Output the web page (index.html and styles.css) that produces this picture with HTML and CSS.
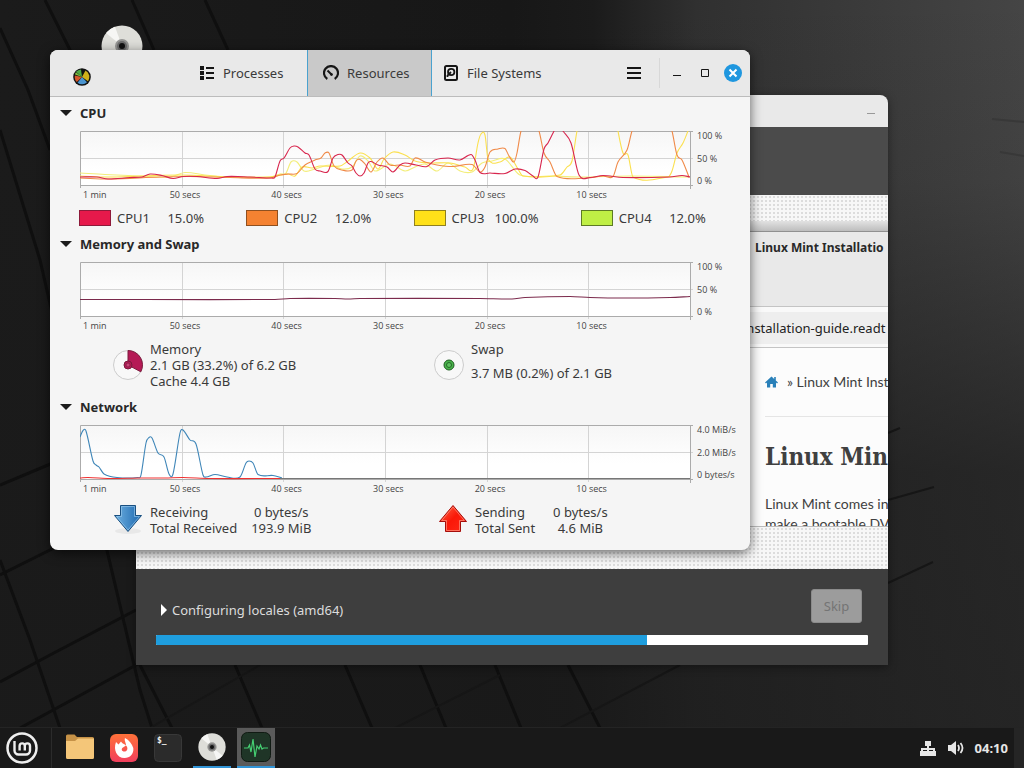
FILE: index.html
```html
<!DOCTYPE html>
<html lang="en">
<head>
    <meta charset="UTF-8">
    <meta name="viewport" content="width=device-width, initial-scale=1.0">
    <title>System Monitor</title>
    <link rel="stylesheet" href="styles.css">
</head>
<body>
    <main class="desktop">
        <svg class="wallpaper" viewBox="0 0 1024 727" preserveAspectRatio="none" aria-hidden="true">
            <defs>
                <linearGradient id="base" x1="0" y1="0" x2="1" y2="0">
                    <stop offset="0" stop-color="#1b1b1b"/>
                    <stop offset="0.5" stop-color="#171717"/>
                    <stop offset="0.58" stop-color="#1b1b1b"/>
                    <stop offset="0.68" stop-color="#303030"/>
                    <stop offset="1" stop-color="#454545"/>
                </linearGradient>
                <linearGradient id="shade" x1="0" y1="0" x2="0" y2="1">
                    <stop offset="0" stop-color="#1a1a1a" stop-opacity="0"/>
                    <stop offset="0.25" stop-color="#1a1a1a" stop-opacity="0.1"/>
                    <stop offset="0.65" stop-color="#1a1a1a" stop-opacity="0.7"/>
                    <stop offset="1" stop-color="#1a1a1a" stop-opacity="0.75"/>
                </linearGradient>
            </defs>
            <rect width="1024" height="727" fill="url(#base)"/>
            <rect width="1024" height="727" fill="url(#shade)"/>
            <g fill="none" stroke="#0f0f0f" stroke-width="3">
                <path d="M0 130 40 260 88 470 140 690 152 728"/>
                <path d="M45 0 75 60M132 0 154 50M205 0 228 50"/>
                <path d="M0 28 28 90 50 150"/>
                <path d="M0 485 60 460 136 430M0 575 60 545 136 510M0 682 50 655 136 610M20 728 136 665 180 645"/>
                <path d="M0 560 30 640 60 728M140 665 172 728M235 665 262 728M345 665 372 728M420 665 446 728M495 665 521 728M568 665 600 728"/>
            </g>
            <g fill="none" stroke="#161616" stroke-width="2">
                <path d="M150 728 260 665M395 728 500 675M560 728 680 665"/>
                <path d="M888 500 934 487M888 583 933 562M888 433 900 428"/>
                <path d="M992 119 1024 122M1000 152 1024 156" stroke="#383838"/>
            </g>
        </svg>

        <svg class="desktop-icon" viewBox="0 0 42 42" aria-hidden="true">
            <use href="#disc"/>
        </svg>

        <section class="window installer" aria-label="Install">
            <header class="installer-bar">
                <button class="installer-min" type="button" aria-label="Minimize window"></button>
            </header>
            <div class="installer-head"></div>
            <div class="slide">
                <div class="browser">
                    <div class="browser-tab">Linux Mint Installatio</div>
                    <div class="browser-url"><span>installation-guide.readt</span></div>
                    <div class="browser-page">
                        <nav class="crumbs">
                            <svg width="13" height="12" viewBox="0 0 13 12" aria-hidden="true">
                                <path d="M6.500.600 0 6.400 1 7.400 2 6.500V11.500H5.200V8H7.800V11.500H11V6.500L12 7.400 13 6.400 10.800 4.400V1H9.200V3Z" fill="#2980b9"/>
                            </svg>
                            <span>» Linux Mint Inst</span>
                        </nav>
                        <h1>Linux Min</h1>
                        <p>Linux Mint comes in<br>make a bootable DV</p>
                    </div>
                </div>
            </div>
            <footer class="installer-foot">
                <div class="progress-row">
                    <button class="expander" type="button">
                        <svg width="8" height="12" viewBox="0 0 8 12" aria-hidden="true"><path d="M1 0 7 6 1 12Z" fill="#fff"/></svg>
                        Configuring locales (amd64)
                    </button>
                    <button class="skip" type="button" disabled>Skip</button>
                </div>
                <progress class="bar" value="69" max="100" aria-label="Installation progress"></progress>
            </footer>
        </section>

        <section class="window monitor" aria-label="System Monitor">
            <header class="titlebar">
                <svg class="app-icon" viewBox="0 0 18 18" aria-hidden="true">
                    <circle cx="9" cy="9" r="8.800" fill="#111"/>
                    <path d="M9 9 3 3.800A8 8 0 0 1 8 1.500Z" fill="#4fa944"/>
                    <path d="M9 9 12.500 2.500A7.400 7.400 0 0 1 15 13.200Z" fill="#cfb01a"/>
                    <path d="M9 9 14 14.300A7.200 7.200 0 0 1 4.500 14.800Z" fill="#4a94cf"/>
                    <path d="M9 9 3.800 14A7.200 7.200 0 0 1 1.900 7.400Z" fill="#d4572b"/>
                    <path d="M9 9 2 6.500A7.200 7.200 0 0 1 3 4.300Z" fill="#7fbb3f"/>
                </svg>
                <nav class="tabs">
                    <button class="tab" type="button">
                        <svg width="16" height="16" viewBox="0 0 16 16" fill="#161616" aria-hidden="true">
                            <path d="M1 1h4v4H1zM1 6h4v4H1zM1 11h4v4H1zM7 2h8v2H7zM7 7h8v2H7zM7 12h8v2H7z"/>
                        </svg>
                        Processes
                    </button>
                    <button class="tab active" type="button">
                        <svg width="16" height="16" viewBox="0 0 16 16" fill="none" stroke="#161616" aria-hidden="true">
                            <path d="M4.300 14A7 7 0 1 1 11.700 14" stroke-width="2.200"/>
                            <path d="M4.500 5.500 8.500 9.500" stroke-width="2"/>
                            <circle cx="8.500" cy="9.500" r="1" fill="#161616"/>
                        </svg>
                        Resources
                    </button>
                    <button class="tab" type="button">
                        <svg width="16" height="16" viewBox="0 0 16 16" fill="none" stroke="#161616" aria-hidden="true">
                            <rect x="2" y="1" width="12" height="14" rx="1.500" stroke-width="2"/>
                            <circle cx="8.200" cy="7" r="3.200" stroke-width="1.800"/>
                            <path d="M8 7 4.500 10.500V12" stroke-width="1.800"/>
                        </svg>
                        File Systems
                    </button>
                </nav>
                <button class="menu-button" type="button" aria-label="Menu">
                    <svg width="16" height="14" viewBox="0 0 16 14" fill="#161616" aria-hidden="true"><path d="M1 1h14v2H1zM1 6h14v2H1zM1 11h14v2H1z"/></svg>
                </button>
                <div class="controls">
                    <button type="button" aria-label="Minimize">
                        <svg width="10" height="10" viewBox="0 0 10 10" aria-hidden="true"><path d="M1 7.500h8" stroke="#161616"/></svg>
                    </button>
                    <button type="button" aria-label="Maximize">
                        <svg width="10" height="10" viewBox="0 0 10 10" aria-hidden="true"><path d="M1.500 1.500h7v7h-7z" fill="none" stroke="#161616"/></svg>
                    </button>
                    <button type="button" aria-label="Close">
                        <svg width="18" height="18" viewBox="0 0 18 18" aria-hidden="true">
                            <circle cx="9" cy="9" r="9" fill="#1f97df"/>
                            <path d="M5.500 5.500 12.500 12.500M12.500 5.500 5.500 12.500" stroke="#fff" stroke-width="2"/>
                        </svg>
                    </button>
                </div>
            </header>

            <div class="resources">
                <details open>
                    <summary>CPU</summary>
                    <div class="chart">
                        <svg class="plot" id="cpu-plot" viewBox="0 0 610 55" preserveAspectRatio="none"></svg>
                        <div class="scale"><span>100 %</span><span>50 %</span><span>0 %</span></div>
                        <div class="times"><span>1 min</span><span>50 secs</span><span>40 secs</span><span>30 secs</span><span>20 secs</span><span>10 secs</span></div>
                    </div>
                    <div class="legend">
                        <div class="cpu"><button class="swatch red" type="button" aria-label="CPU1 color"></button><span>CPU1</span><span class="value">15.0%</span></div>
                        <div class="cpu"><button class="swatch orange" type="button" aria-label="CPU2 color"></button><span>CPU2</span><span class="value">12.0%</span></div>
                        <div class="cpu"><button class="swatch yellow" type="button" aria-label="CPU3 color"></button><span>CPU3</span><span class="value">100.0%</span></div>
                        <div class="cpu"><button class="swatch green" type="button" aria-label="CPU4 color"></button><span>CPU4</span><span class="value">12.0%</span></div>
                    </div>
                </details>

                <details open>
                    <summary>Memory and Swap</summary>
                    <div class="chart">
                        <svg class="plot" id="memory-plot" viewBox="0 0 610 55" preserveAspectRatio="none"></svg>
                        <div class="scale"><span>100 %</span><span>50 %</span><span>0 %</span></div>
                        <div class="times"><span>1 min</span><span>50 secs</span><span>40 secs</span><span>30 secs</span><span>20 secs</span><span>10 secs</span></div>
                    </div>
                    <div class="stats">
                        <div class="stat">
                            <svg width="30" height="32" viewBox="0 0 30 32" aria-hidden="true">
                                <circle cx="15" cy="16" r="14.500" fill="#f8f8f8" stroke="#ccc"/>
                                <path d="M15 16V1.500A14.500 14.500 0 0 1 27.800 22.800Z" fill="#b51a56" stroke="#7a1a3c"/>
                                <circle cx="15" cy="16" r="4" fill="#b51a56" stroke="#7a1a3c"/>
                                <circle cx="15" cy="16" r="2" fill="#c94679" stroke="#7a1a3c" stroke-width="0.700"/>
                            </svg>
                            <div>Memory<br>2.1 GB (33.2%) of 6.2 GB<br>Cache 4.4 GB</div>
                        </div>
                        <div class="stat">
                            <svg width="30" height="32" viewBox="0 0 30 32" aria-hidden="true">
                                <circle cx="15" cy="16" r="14.500" fill="#f8f8f8" stroke="#ccc"/>
                                <circle cx="15" cy="16" r="5" fill="#49b34b" stroke="#1f5c22"/>
                                <circle cx="15" cy="16" r="2.500" fill="#5fc060" stroke="#246b28"/>
                            </svg>
                            <div class="swap"><span>Swap</span><span>3.7 MB (0.2%) of 2.1 GB</span></div>
                        </div>
                    </div>
                </details>

                <details open>
                    <summary>Network</summary>
                    <div class="chart">
                        <svg class="plot" id="network-plot" viewBox="0 0 610 55" preserveAspectRatio="none"></svg>
                        <div class="scale"><span>4.0 MiB/s</span><span>2.0 MiB/s</span><span>0 bytes/s</span></div>
                        <div class="times"><span>1 min</span><span>50 secs</span><span>40 secs</span><span>30 secs</span><span>20 secs</span><span>10 secs</span></div>
                    </div>
                    <div class="stats">
                        <div class="stat">
                            <svg width="30" height="32" viewBox="0 0 30 32" aria-hidden="true">
                                <defs>
                                    <linearGradient id="down" x2="1"><stop offset="0" stop-color="#6fb0e0"/><stop offset="1" stop-color="#1c68b0"/></linearGradient>
                                    <linearGradient id="up" x2="1" y2="1"><stop offset="0" stop-color="#ff6a4a"/><stop offset="0.500" stop-color="#fa1808"/><stop offset="1" stop-color="#ff2a18"/></linearGradient>
                                </defs>
                                <ellipse cx="15" cy="27" rx="13" ry="3" fill="#000" opacity="0.050"/>
                                <path d="M7.500 1.500h15v10h6L15 27.500 1.500 11.500h6z" fill="url(#down)" stroke="#194f80"/>
                                <path d="M8.500 2.500h13v10h5L15 26 3.600 12.500h4.900z" fill="none" stroke="#9dcbee" opacity="0.600"/>
                            </svg>
                            <div class="pairs"><span>Receiving</span><span class="amount">0 bytes/s</span><span>Total Received</span><span class="amount">193.9 MiB</span></div>
                        </div>
                        <div class="stat sending">
                            <svg width="30" height="32" viewBox="0 0 30 32" aria-hidden="true">
                                <path d="M7.500 27.500V17.500h-6L15 1.500 28.500 17.500h-6v10z" fill="url(#up)" stroke="#a50d0a"/>
                                <path d="M8.500 26.500V16.500H3.700L15 3 26.300 16.500H21.500v10z" fill="none" stroke="#ff9480" opacity="0.700"/>
                            </svg>
                            <div class="pairs"><span>Sending</span><span class="amount">0 bytes/s</span><span>Total Sent</span><span class="amount">4.6 MiB</span></div>
                        </div>
                    </div>
                </details>
            </div>
        </section>
    </main>

    <footer class="panel">
        <button class="mint-menu" type="button" aria-label="Menu">
            <svg width="32" height="32" viewBox="0 0 32 32" fill="none" stroke="#eee" aria-hidden="true">
                <circle cx="16" cy="16" r="14.500" stroke-width="2.500"/>
                <path d="M8.500 9V18.500A4 4 0 0 0 12.500 22.500H20A4 4 0 0 0 24 18.500V14A2.600 2.600 0 0 0 18.800 14V18.500M18.800 14A2.600 2.600 0 0 0 13.600 14V18.500" stroke-width="2.400"/>
            </svg>
        </button>
        <nav class="launchers">
            <button class="launcher" type="button" aria-label="Files">
                <svg width="30" height="30" viewBox="0 0 30 30" aria-hidden="true">
                    <path d="M1 3a1.500 1.500 0 0 1 1.500-1.500H9.500L12 4H27.500A1.500 1.500 0 0 1 29 5.500V11H1z" fill="#c69247"/>
                    <path d="M1 8H10L13 5.500H29V24.500A1.500 1.500 0 0 1 27.500 26H2.500A1.500 1.500 0 0 1 1 24.500z" fill="#f4c679"/>
                </svg>
            </button>
            <button class="launcher" type="button" aria-label="Firefox">
                <svg width="30" height="30" viewBox="0 0 30 30" aria-hidden="true">
                    <defs><linearGradient id="fox" x2="0" y2="1"><stop offset="0" stop-color="#ff7139"/><stop offset="1" stop-color="#f23f5d"/></linearGradient></defs>
                    <rect x="1" y="1" width="28" height="28" rx="6" fill="url(#fox)"/>
                    <path d="M7 9 9.500 11.500 12 8.500C13 10 14 11 15 11L17 12.500 14 14.500C11.500 16 13 19 16 18.500 19 18 19 14 17 12.500 17 9 15 8 16 5 20 7 23 11 24.300 15 25 21 21 25 15.500 25 8 25 4 17 7 9Z" fill="#fff"/>
                </svg>
            </button>
            <button class="launcher" type="button" aria-label="Terminal">
                <svg width="30" height="30" viewBox="0 0 30 30" aria-hidden="true">
                    <rect x="1.500" y="1.500" width="27" height="27" rx="4" fill="#2b2b2b" stroke="#383838"/>
                    <text class="prompt" x="4" y="10">$_</text>
                </svg>
            </button>
            <button class="launcher running" type="button" aria-label="Install Linux Mint">
                <svg width="28" height="28" viewBox="0 0 42 42" aria-hidden="true">
                    <g id="disc">
                        <circle cx="21" cy="21" r="20.500" fill="#deded9"/>
                        <path d="M21 21 5 8A20.500 20.500 0 0 1 14 1.800Z" fill="#f6f6f4"/>
                        <path d="M21 21 28 40A20.500 20.500 0 0 0 37 34Z" fill="#f6f6f4"/>
                        <circle cx="21" cy="21" r="7" fill="#969694"/>
                        <circle cx="21" cy="21" r="5" fill="#6c6c6c"/>
                        <circle cx="21" cy="21" r="3" fill="#111"/>
                    </g>
                </svg>
            </button>
            <button class="launcher running current" type="button" aria-label="System Monitor">
                <svg width="30" height="30" viewBox="0 0 30 30" aria-hidden="true">
                    <rect x="0.500" y="0.500" width="29" height="29" rx="6" fill="#1f3527" stroke="#101a13"/>
                    <path d="M3 16H7L8.500 13 10 20 12 7 14 25 16 14 18 17 19.500 13 21 17 22.500 16H27" fill="none" stroke="#45cf72" stroke-width="1.200"/>
                </svg>
            </button>
        </nav>
        <div class="tray">
            <svg width="18" height="17" viewBox="0 0 18 17" fill="#e6e6e6" aria-hidden="true">
                <path d="M6 1h6v5h-2v2h6v3h1v5h-6v-5h3v-1h-4v1h1v5H7v-5h1v-1H4v1h3v5H1v-5h1V8h6V6H6z"/>
            </svg>
            <svg width="18" height="16" viewBox="0 0 18 16" aria-hidden="true">
                <path d="M1 5H4L9 1V15L4 11H1z" fill="#e6e6e6"/>
                <path d="M11 5Q13 8 11 11M13.500 3Q17.500 8 13.500 13" fill="none" stroke="#e6e6e6" stroke-width="1.800"/>
            </svg>
            <time>04:10</time>
        </div>
        <button class="show-desktop" type="button" aria-label="Show desktop"></button>
    </footer>

    <script src="charts.js"></script>
</body>
</html>
```

FILE: styles.css
```css
* {
    box-sizing: border-box;
}

body {
    margin: 0;
    height: 100vh;
    display: flex;
    flex-direction: column;
    overflow: hidden;
    background: #1a1a1a;
    color: #3a3a3a;
    font-family: "Noto Sans", "Open Sans", sans-serif;
    font-size: 13px;
    line-height: 16px;
}

button {
    padding: 0;
    border: none;
    background: none;
    color: inherit;
    font: inherit;
}

svg {
    display: block;
    flex: none;
}

.desktop {
    position: relative;
    flex: 1;
    min-height: 0;
}

.wallpaper {
    position: absolute;
    inset: 0;
    width: 100%;
    height: 100%;
}

.desktop-icon {
    position: absolute;
    left: 101px;
    top: 25px;
    width: 42px;
}

.window {
    position: absolute;
    overflow: hidden;
}

/* installer window */
.installer {
    left: 136px;
    top: 95px;
    width: 752px;
    border-radius: 8px 8px 0 0;
    background: #3e3e3e;
    box-shadow: 0 2px 10px rgba(0, 0, 0, 0.4);
}

.installer-bar {
    height: 32px;
    padding: 0 13px;
    display: flex;
    align-items: center;
    justify-content: flex-end;
    background: #e9e9e9;
}

.installer-min {
    width: 8px;
    height: 1px;
    margin-top: 5px;
    background: #999;
}

.installer-head {
    height: 68px;
    background: #4b4b4b;
}

.slide {
    height: 374px;
    padding: 26px 0 42px 400px;
    overflow: hidden;
    background-color: #f7f7f7;
    background-image: radial-gradient(circle, #dcdcdc 1px, transparent 1px);
    background-size: 4px 4px;
}

.browser {
    height: 306px;
    padding-top: 10px;
    border-bottom: 1px solid #bbb;
    overflow: hidden;
    white-space: nowrap;
    background: linear-gradient(#e2e2e2, #bdbdbd 10px, #fcfcfc 10px);
}

.browser-tab {
    height: 75px;
    padding: 8px 0 0 219px;
    border-top: 1px solid #909090;
    background: #e9e9e9;
    color: #282828;
    font-size: 12px;
    font-weight: bold;
}

.browser-url {
    height: 42px;
    padding: 5px 0 1px;
    border-top: 1px solid #c4c4c4;
    border-bottom: 1px solid #c4c4c4;
    background: #f9f9f9;
}

.browser-url span {
    display: block;
    padding-left: 207px;
    background: #eee;
    color: #222;
    font-size: 13px;
    line-height: 32px;
}

.browser-page {
    padding-left: 229px;
    color: #404040;
    font-family: Lato, sans-serif;
    font-size: 14px;
    line-height: 20px;
}

.crumbs {
    height: 69px;
    display: flex;
    align-items: center;
    gap: 9px;
    border-bottom: 1px solid #e5e5e5;
}

.browser-page h1 {
    margin: 24px 0 21px;
    font-family: "DejaVu Serif Condensed", "DejaVu Serif", serif;
    font-size: 24px;
    line-height: 32px;
}

.browser-page p {
    margin: 0;
}

.installer-foot {
    padding: 20px;
    color: #dcdcdc;
}

.progress-row {
    display: flex;
    align-items: center;
    justify-content: space-between;
    padding: 0 6px 0 4px;
}

.expander {
    display: flex;
    align-items: center;
    gap: 4px;
    padding-top: 8px;
}

.skip {
    width: 51px;
    height: 34px;
    border: 1px solid #8b8b8b;
    border-radius: 3px;
    background: #9c9c9c;
    color: #747474;
}

.bar {
    display: block;
    width: 100%;
    height: 10px;
    margin-top: 12px;
    appearance: none;
    border: none;
    border-radius: 1px;
    overflow: hidden;
}

.bar::-webkit-progress-bar {
    background: #fff;
}

.bar::-webkit-progress-value {
    background: #1f9ede;
}

/* system monitor window */
.monitor {
    left: 50px;
    top: 50px;
    width: 700px;
    border-radius: 8px;
    background: #f5f5f5;
    box-shadow: 0 3px 12px rgba(0, 0, 0, 0.6);
}

.titlebar {
    height: 47px;
    display: flex;
    border-bottom: 1px solid #bcbcbc;
    background: #e9e9e9;
}

.app-icon {
    width: 18px;
    align-self: center;
    margin: 7px 0 0 23px;
}

.tabs {
    display: flex;
    margin-left: 92px;
}

.tab {
    width: 124px;
    padding-left: 16px;
    display: flex;
    align-items: center;
    gap: 8px;
}

.tab.active {
    width: 125px;
    padding-left: 15px;
    border-left: 1px solid #4aa2cf;
    border-right: 1px solid #4aa2cf;
    background: #c9c9c9;
}

.tab.active + .tab {
    padding-left: 11px;
}

.menu-button {
    width: 50px;
    margin-left: auto;
    display: flex;
    align-items: center;
    justify-content: center;
}

.controls {
    display: flex;
    align-items: center;
    margin: 8px 0;
    padding: 0 3px;
    border-left: 1px solid #d8d8d8;
}

.controls button {
    width: 28px;
    display: flex;
    justify-content: center;
}

.resources {
    padding: 7px 0 14px 30px;
}

summary {
    position: relative;
    height: 18px;
    margin-bottom: 9px;
    color: #282828;
    font-weight: bold;
    line-height: 18px;
    list-style: none;
}

summary::before {
    content: "";
    position: absolute;
    left: -20px;
    top: 6px;
    border: 6px solid transparent;
    border-top-color: #1c1c1c;
    border-bottom: none;
}

details + details {
    margin-top: 9px;
}

.chart {
    display: grid;
    grid-template-columns: 1fr 43px;
    column-gap: 7px;
    padding-right: 10px;
    color: #444;
    font-family: "Open Sans", sans-serif;
    font-size: 9px;
}

.plot {
    width: 100%;
    height: 55px;
    overflow: visible;
    background: linear-gradient(#f6f6f6, #fff 70%);
}

.plot path {
    fill: none;
    vector-effect: non-scaling-stroke;
}

.scale {
    display: flex;
    flex-direction: column;
    justify-content: space-between;
    line-height: 10px;
    white-space: nowrap;
}

.times {
    display: grid;
    grid-template-columns: repeat(6, 1fr);
    padding-top: 3px;
    line-height: 12px;
}

.times span {
    margin-left: -12px;
}

.times span:first-child {
    margin-left: 3px;
}

.legend {
    display: grid;
    grid-template-columns: repeat(4, 1fr);
    margin: 9px 2px 0 -1px;
}

.cpu {
    width: 125px;
    display: flex;
    gap: 6px;
}

.value {
    margin-left: auto;
}

.swatch {
    width: 32px;
    height: 16px;
    border: 1px solid;
}

.red {
    background: #e6194b;
    border-color: #8d1a3a;
}

.orange {
    background: #f58231;
    border-color: #8f5020;
}

.yellow {
    background: #ffe119;
    border-color: #8f8020;
}

.green {
    background: #bfef45;
    border-color: #5d7a25;
}

.stats {
    display: grid;
    grid-template-columns: 321px 1fr;
    margin-top: 9px;
    padding-left: 33px;
}

.stat {
    display: flex;
    align-items: center;
    gap: 7px;
}

.swap {
    display: grid;
    gap: 8px;
    padding-bottom: 8px;
}

.sending {
    padding-left: 4px;
}

.pairs {
    display: grid;
    grid-template-columns: auto auto;
    column-gap: 14px;
}

.sending .pairs {
    column-gap: 18px;
}

.amount {
    text-align: center;
}

/* bottom panel */
.panel {
    height: 41px;
    position: relative;
    display: flex;
    align-items: stretch;
    border-top: 1px solid #242424;
    background: #191919;
    color: #e6e6e6;
}

.mint-menu {
    width: 52px;
    padding-left: 6px;
    display: flex;
    align-items: center;
    border-right: 1px solid #2b2b2b;
}

.launchers {
    display: flex;
    gap: 6px;
    margin-left: 9px;
}

.launcher {
    width: 38px;
    display: flex;
    align-items: center;
    justify-content: center;
}

.running {
    border-bottom: 2px solid #3194d6;
}

.current {
    background: #5a5a5a;
}

.prompt {
    fill: #f0f0f0;
    font: bold 8px "DejaVu Sans Mono", monospace;
}

.tray {
    display: flex;
    align-items: center;
    gap: 10px;
    margin-left: auto;
    padding-right: 6px;
    font-weight: bold;
}

.show-desktop {
    width: 10px;
    background: #252525;
}
```

FILE: charts.js
```js
// Series are lists of [x, y] in the 610 x 55 plot area.
const cpu1 = [[0,46],[17,46],[28,48],[50,46.5],[62,46],[70,43],[82,44.5],[93,47.5],[103,45.5],[117,45.5],[137,47.5],[147,45.5],[170,46],[192,47],[195,46],[200,30],[204,27],[210,17],[214,15],[218,16],[225,22],[229,24],[235,38],[240,40],[248,40.5],[253,27],[258,23.5],[262,24],[268,32],[272,35],[276,42],[280,45],[284,42],[288,32],[291,30.5],[298,34],[307,36],[313,41],[320,34],[325,32],[336,34],[347,35.5],[355,29],[368,27],[380,29],[391,23.5],[395,29],[400,41.5],[410,42],[425,42.5],[435,38],[445,39.5],[453,45],[458,46],[464,18],[468,12],[474,0],[478,-8],[483,0],[491,12],[499,44],[510,46.5],[523,44.5],[543,46.5],[590,46],[602,44.5],[610,46]];
const cpu2 = [[0,47],[30,48],[80,46],[110,45.5],[150,46.5],[190,47],[200,44],[208,43],[217,42.5],[225,34],[235,29],[241,27],[245,22],[249,22],[254,35],[262,39],[272,39],[276,30],[280,28.5],[285,33],[291,41],[297,31],[303,27],[310,34],[320,34],[330,35],[335,27],[345,31],[357,34],[373,35.5],[392,33.5],[400,41],[405,36],[410,21],[418,18],[425,17.5],[429,25],[434,31],[437,22],[441,0],[450,-20],[459,0],[464,22],[470,31],[477,45.5],[507,47],[523,45],[533,45.5],[538,31],[547,19],[552,0],[560,-20],[585,-20],[592,0],[597,24],[602,29],[609,46]];
const cpu3 = [[0,45],[30,46],[100,44],[150,46],[190,46],[208,43],[215,45],[222,36],[232,37],[240,35],[260,35],[268,30],[280,22],[290,27],[298,38],[304,28],[313,21],[325,24],[335,30],[350,32],[370,32],[385,36],[393,38],[398,12],[401,3],[405,4],[408,28],[420,31],[430,26],[438,38],[443,45],[480,44],[487,36],[492,30],[497,0],[502,-20],[535,-20],[538,0],[543,22],[548,24],[553,46],[588,46],[592,40],[597,22],[603,12],[608,0],[610,-5]];
const cpu4 = [[0,42],[25,43.5],[60,45],[90,46],[105,41.5],[125,44],[150,46],[190,46],[200,43],[206,42],[211,31],[217,31],[224,40],[235,38],[250,34],[262,38],[272,36],[280,25],[288,30],[295,40],[310,33],[325,40],[335,36],[345,33],[357,40],[368,32],[380,40],[392,41],[402,32],[412,30],[425,28],[440,44],[470,45],[500,46],[550,45],[610,46]];

const memory = [[0,37.5],[195,37.5],[210,36.5],[255,36.5],[268,37],[280,36.5],[400,36.5],[432,37],[445,35.5],[490,34.5],[510,35.5],[545,36],[590,35.5],[610,34.5]];

const received = [[0,12],[3,5.5],[6,6],[13,36],[16,40],[19,42],[24,49],[37,52.5],[58,52.5],[61,50],[66,18],[69,12.5],[72,13],[78,28],[84,32],[89,49],[93,49],[100,8],[103,5],[110,15],[116,19],[123,50],[126,52],[135,49.5],[147,52],[160,52],[166,38],[169,36],[173,38],[178,49.5],[193,50.5],[202,53]];
const sent = [[0,53],[8,52.5],[30,53.5],[60,53],[85,53],[103,52.5],[130,53.5],[200,53.5]];
const idle = [[200,53.5],[610,53.5]];

// Catmull-Rom spline through the points
function curve(points) {
    let d = `M${points[0]}`;
    for (let i = 0; i < points.length - 1; i++) {
        const p0 = points[i - 1] || points[i];
        const p1 = points[i];
        const p2 = points[i + 1];
        const p3 = points[i + 2] || p2;
        const third = (p2[0] - p1[0]) / 3;
        const m1 = (p2[1] - p0[1]) / (p2[0] - p0[0]);
        const m2 = (p3[1] - p1[1]) / (p3[0] - p1[0]);
        d += `C${p1[0] + third},${p1[1] + m1 * third} ${p2[0] - third},${p2[1] - m2 * third} ${p2}`;
    }
    return d;
}

function drawChart(id, series) {
    const svg = document.getElementById(id);
    let html = `<clipPath id="${id}-clip"><rect width="610" height="55"/></clipPath>`;
    for (let i = 1; i < 6; i++) {
        const x = Math.round(i * 610 / 6) + 0.5;
        html += `<path d="M${x} 0V57" stroke="#d4d4d4"/>`;
    }
    html += '<path d="M0 27.5H613" stroke="#d4d4d4"/>';
    html += '<path d="M0.5 57V0.5H613M610.5 0V58M0 54.5H613" stroke="#ababab"/>';
    html += `<g clip-path="url(#${id}-clip)">`;
    series.forEach(([points, color]) => {
        html += `<path d="${curve(points)}" stroke="${color}" stroke-width="1.1"/>`;
    });
    svg.innerHTML = html + '</g>';
}

drawChart('cpu-plot', [[cpu4, '#f3ee7a'], [cpu3, '#fbe04e'], [cpu2, '#f08a48'], [cpu1, '#d8264e']]);
drawChart('memory-plot', [[memory, '#7b2a4c']]);
drawChart('network-plot', [[received, '#3f86b8'], [sent, '#f03030'], [idle, '#777']]);
```
